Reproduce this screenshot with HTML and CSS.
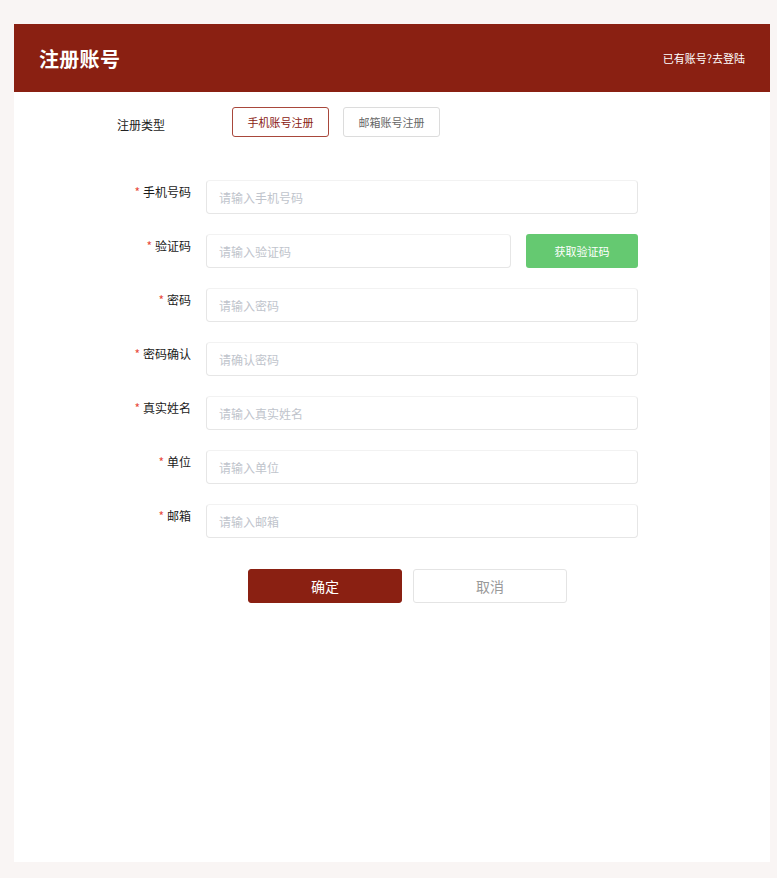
FILE: index.html
```html
<!DOCTYPE html>
<html lang="zh-CN">
<head>
<meta charset="utf-8">
<title>注册账号</title>
<link rel="stylesheet" href="styles.css">
</head>
<body>
<div class="card">
  <div class="header">
    <div class="title">注册账号</div>
    <a class="login-link">已有账号?去登陆</a>
  </div>
  <div class="type-row">
    <div class="type-label">注册类型</div>
    <div class="type-btns">
      <button class="type-btn active">手机账号注册</button>
      <button class="type-btn">邮箱账号注册</button>
    </div>
  </div>
  <div class="form">
    <div class="row">
      <div class="label"><span class="req">*</span>手机号码</div>
      <div class="field"><input class="input" placeholder="请输入手机号码"></div>
    </div>
    <div class="row">
      <div class="label"><span class="req">*</span>验证码</div>
      <div class="field field-code">
        <input class="input" placeholder="请输入验证码">
        <button class="code-btn">获取验证码</button>
      </div>
    </div>
    <div class="row">
      <div class="label"><span class="req">*</span>密码</div>
      <div class="field"><input class="input" type="password" placeholder="请输入密码"></div>
    </div>
    <div class="row">
      <div class="label"><span class="req">*</span>密码确认</div>
      <div class="field"><input class="input" type="password" placeholder="请确认密码"></div>
    </div>
    <div class="row">
      <div class="label"><span class="req">*</span>真实姓名</div>
      <div class="field"><input class="input" placeholder="请输入真实姓名"></div>
    </div>
    <div class="row">
      <div class="label"><span class="req">*</span>单位</div>
      <div class="field"><input class="input" placeholder="请输入单位"></div>
    </div>
    <div class="row">
      <div class="label"><span class="req">*</span>邮箱</div>
      <div class="field"><input class="input" placeholder="请输入邮箱"></div>
    </div>
  </div>
  <div class="actions">
    <button class="btn btn-primary">确定</button>
    <button class="btn btn-default">取消</button>
  </div>
</div>
</body>
</html>
```

FILE: styles.css
```css
* { box-sizing: border-box; }
html, body { margin: 0; padding: 0; }
body {
  background: #f9f5f4;
  font-family: "Noto Sans CJK SC", "Noto Sans", sans-serif;
  padding: 24px 7px 16px 14px;
}
.card {
  background: #ffffff;
  width: 756px;
  height: 838px;
}
.header {
  height: 68px;
  background: #8a2012;
  display: flex;
  align-items: center;
  justify-content: space-between;
  padding: 0 25px;
  color: #fff;
}
.title {
  font-size: 20px;
  font-weight: 700;
  letter-spacing: 0.3px;
}
.login-link {
  font-size: 11px;
  color: #fff;
  cursor: pointer;
}
.type-row {
  display: flex;
  align-items: center;
  margin-top: 15px;
  padding-left: 103px;
  height: 30px;
}
.type-label {
  width: 115px;
  font-size: 12px;
  color: #222;
  padding-top: 4px;
}
.type-btns {
  display: flex;
  gap: 14px;
}
.type-btn {
  width: 97px;
  height: 30px;
  border: 1px solid #dcdcdc;
  border-radius: 3px;
  background: #fff;
  font-family: inherit;
  font-size: 11px;
  color: #666;
  padding: 0;
}
.type-btn.active {
  border-color: #a8473b;
  color: #8a2012;
}
.form {
  margin-top: 43px;
  display: flex;
  flex-direction: column;
  gap: 20px;
}
.row {
  display: flex;
  align-items: flex-start;
}
.label {
  width: 192px;
  padding-right: 15px;
  text-align: right;
  font-size: 12px;
  line-height: 24px;
  color: #1a1a1a;
}
.req {
  color: #e84c3d;
  margin-right: 3px;
}
.field {
  width: 432px;
  display: flex;
  gap: 15px;
}
.input {
  width: 100%;
  height: 34px;
  border: 1px solid #e6e6e6;
  border-top-color: #f2f2f2;
  border-radius: 4px;
  padding: 0 12px;
  font-family: inherit;
  font-size: 12px;
  color: #333;
  outline: none;
  background: #fff;
}
.input::placeholder {
  color: #c0c4cc;
}
.field-code .input {
  width: 305px;
  flex: none;
}
.code-btn {
  width: 112px;
  flex: none;
  height: 34px;
  border: none;
  border-radius: 3px;
  background: #65c971;
  color: #fff;
  font-family: inherit;
  font-size: 11px;
}
.actions {
  display: flex;
  gap: 11px;
  margin-top: 31px;
  padding-left: 234px;
}
.btn {
  width: 154px;
  height: 34px;
  border-radius: 3px;
  font-family: inherit;
  font-size: 14px;
  padding: 0;
}
.btn-primary {
  background: #8a2012;
  border: 1px solid #8a2012;
  color: #fff;
}
.btn-default {
  background: #fff;
  border: 1px solid #e4e4e4;
  color: #999;
}
```
